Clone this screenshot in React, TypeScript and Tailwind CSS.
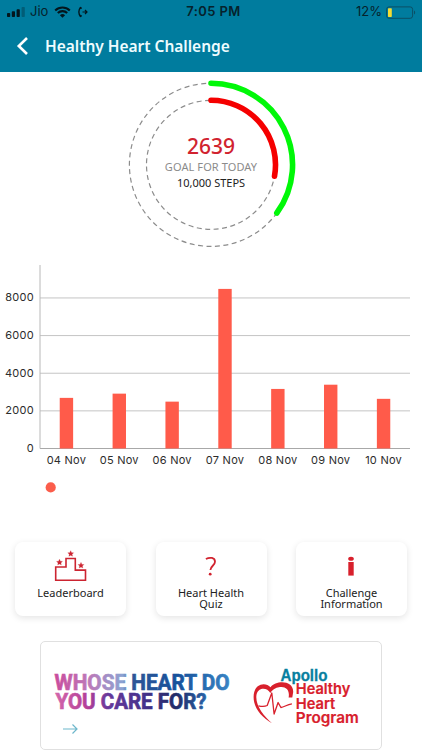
const days = [
  { label: "04 Nov", steps: 2690 },
  { label: "05 Nov", steps: 2915 },
  { label: "06 Nov", steps: 2490 },
  { label: "07 Nov", steps: 8480 },
  { label: "08 Nov", steps: 3165 },
  { label: "09 Nov", steps: 3390 },
  { label: "10 Nov", steps: 2639 },
]

const ticks = [0, 2000, 4000, 6000, 8000]

const CHART_LEFT = 40
const CHART_RIGHT = 410
const BASELINE = 188.5
const PX_PER_STEP = 0.01882

function StatusBar() {
  return (
    <div className="grid h-6 grid-cols-3 items-center pl-[7px] pr-[6px] font-['Inter','Liberation_Sans',sans-serif] text-[13px] text-[#06222c]">
      <div className="flex items-center">
        <svg width="19" height="12" viewBox="0 0 19 12" fill="#03161d">
          <rect x="0" y="7" width="3.2" height="4" rx="0.8" />
          <rect x="4.8" y="5.3" width="3.2" height="5.7" rx="0.8" />
          <rect x="9.6" y="3.2" width="3.2" height="7.8" rx="0.8" />
          <rect x="14.6" y="1" width="3.2" height="10" rx="0.8" opacity="0.3" />
        </svg>
        <span className="ml-[4px] w-[19px]">Jio</span>
        <svg className="ml-[5px]" width="17" height="12" viewBox="0 0 17 12" fill="none" stroke="#03161d" strokeWidth="2.1">
          <path d="M1.2 4.4a10.6 10.6 0 0 1 14.6 0" />
          <path d="M3.8 7.1a6.7 6.7 0 0 1 9.4 0" />
          <path d="M8.5 11.8 5.9 9.2a3.8 3.8 0 0 1 5.2 0z" fill="#03161d" stroke="none" />
        </svg>
        <svg className="ml-[6px]" width="12" height="12" viewBox="0 0 12 12" fill="none" stroke="#03161d">
          <path d="M3.8 1.2C1.2 3.5 1.2 8.5 3.8 10.8" strokeWidth="1.4" />
          <path d="M3.2 1.2l1.2 1.6M3.2 10.8l1.2-1.6" strokeWidth="1.8" />
          <path d="M5.5 6H10M8 4l2 2-2 2" strokeWidth="1.2" />
        </svg>
      </div>
      <div className="pl-[4px] text-center text-[13px] font-semibold tracking-[0.4px]">7:05 PM</div>
      <div className="flex items-center justify-end">
        <span className="mr-[4px] text-[13px]">12%</span>
        <svg width="30" height="13" viewBox="0 0 30 13">
          <rect x="0.6" y="0.9" width="26" height="11.4" rx="2.4" fill="none" stroke="#0b4f65" />
          <rect x="2" y="2.3" width="3.8" height="8.6" rx="0.6" fill="#f5dc32" />
          <path d="M28 4.6c1.6.6 1.6 3.4 0 4z" fill="#0b4f65" />
        </svg>
      </div>
    </div>
  )
}

function Header() {
  return (
    <header className="h-[72px] bg-[#007c9e]">
      <StatusBar />
      <div className="flex h-[43px] items-center pl-[16px]">
        <svg width="14" height="20" viewBox="0 0 14 20" fill="none" stroke="#fff" strokeWidth="2.6">
          <path d="M11 2 2.8 10l8.2 8" />
        </svg>
        <h1 className="ml-[15px] pt-[2px] text-[15.5px] font-semibold tracking-[-0.02px] whitespace-nowrap text-[#eefcff]">
          Healthy Heart Challenge
        </h1>
      </div>
    </header>
  )
}

function GoalRing() {
  return (
    <section className="grid h-[188px] place-items-center [grid-template-areas:'ring']">
      <svg className="[grid-area:ring]" width="422" height="188" viewBox="0 72 422 188" fill="none">
        <circle cx="211" cy="164.8" r="81.6" stroke="#8c8c8c" strokeWidth="1.2" strokeDasharray="5 3.5" />
        <circle cx="211" cy="164.8" r="64.5" stroke="#8c8c8c" strokeWidth="1.2" strokeDasharray="5 3.5" />
        <path d="M211 83.2A81.6 81.6 0 0 1 276.8 213" stroke="#00f808" strokeWidth="5.6" strokeLinecap="round" />
        <path d="M211 100.3A64.5 64.5 0 0 1 274.5 176.2" stroke="#f50000" strokeWidth="5.6" strokeLinecap="round" />
      </svg>
      <div className="flex flex-col items-center pb-[9px] text-center [grid-area:ring]">
        <span className="text-[21px] leading-[24px] font-medium text-[#d1232f]">2639</span>
        <span className="text-[11px] leading-[17px] tracking-[0.1px] text-[#8b8b8b]">GOAL FOR TODAY</span>
        <span className="text-[11px] leading-[15px] text-[#222]">10,000 STEPS</span>
      </div>
    </section>
  )
}

function StepsChart() {
  const slot = (CHART_RIGHT - CHART_LEFT) / days.length

  return (
    <section className="h-[270px]">
      <svg width="422" height="240" viewBox="0 0 422 240" className="font-['Inter','Liberation_Sans',sans-serif] text-[11px]">
        {ticks.map((tick) => {
          const y = BASELINE - tick * PX_PER_STEP
          return (
            <g key={tick}>
              <line x1={CHART_LEFT} x2={CHART_RIGHT} y1={y} y2={y} stroke={tick ? "#c4c4c4" : "#a8a8a8"} />
              <text x="34" y={y + 3.5} textAnchor="end" fill="#2c2c2c" letterSpacing="0.3">
                {tick}
              </text>
            </g>
          )
        })}
        <line x1={CHART_LEFT} x2={CHART_LEFT} y1="5" y2={BASELINE} stroke="#b8b8b8" />
        {days.map((day, i) => {
          const center = CHART_LEFT + slot * (i + 0.5)
          const height = day.steps * PX_PER_STEP
          return (
            <g key={day.label}>
              <rect x={center - 6.7} y={BASELINE - height} width="13.4" height={height} fill="#ff5b4a" />
              <text x={center} y="204.4" textAnchor="middle" fill="#2c2c2c" letterSpacing="0.25">
                {day.label}
              </text>
            </g>
          )
        })}
        <circle cx="50.7" cy="227.4" r="5.1" fill="#fb5d4b" />
      </svg>
    </section>
  )
}

function Star({ x, y }: { x: number; y: number }) {
  return (
    <path
      transform={`translate(${x} ${y})`}
      d="M0-2.9.9-.9 2.9-.8 1.4.7 1.8 2.6 0 1.7-1.8 2.6-1.4.7-2.9-.8-.9-.9z"
      fill="#cc2431"
      stroke="#cc2431"
      strokeWidth="0.3"
    />
  )
}

function PodiumIcon() {
  return (
    <svg width="34" height="32" viewBox="0 0 34 32">
      <path d="M1.7 17H12V8.5h9.3v11.6h10.2v10.2H1.7z" fill="none" stroke="#cc2431" strokeWidth="1.6" />
      <Star x={16.7} y={3.6} />
      <Star x={5.5} y={12.2} />
      <Star x={27} y={15.3} />
    </svg>
  )
}

function QuestionIcon() {
  return (
    <svg width="14" height="32" viewBox="0 0 14 32">
      <path
        d="M1.9 9C6 6.8 11 7.6 11 11.7c0 3.8-4.5 4.3-4.6 8.3"
        fill="none"
        stroke="#d1232f"
        strokeWidth="1.8"
      />
      <circle cx="6.2" cy="24.2" r="1.4" fill="#d1232f" />
    </svg>
  )
}

function InfoIcon() {
  return (
    <svg width="10" height="32" viewBox="0 0 10 32" fill="#d8202c">
      <ellipse cx="4" cy="8.8" rx="2.8" ry="2" />
      <path d="M1.3 12h5.4v13.6H1.3z" />
    </svg>
  )
}

const cards = [
  { title: ["Leaderboard"], icon: <PodiumIcon /> },
  { title: ["Heart Health", "Quiz"], icon: <QuestionIcon /> },
  { title: ["Challenge", "Information"], icon: <InfoIcon /> },
]

function Cards() {
  return (
    <section className="flex justify-between px-[15px] pt-[12px]">
      {cards.map((card) => (
        <button
          key={card.title[0]}
          className="flex h-[74px] w-[111px] flex-col items-center rounded-[8px] bg-white pt-[8px] shadow-[0_2px_7px_rgba(0,0,0,0.11)]"
        >
          {card.icon}
          <span className="mt-[5px] text-[11px] leading-[11px] text-[#222]">
            {card.title.map((line) => (
              <span key={line} className="block whitespace-nowrap">
                {line}
              </span>
            ))}
          </span>
        </button>
      ))}
    </section>
  )
}

function Banner() {
  return (
    <section className="mx-[40px] mt-[25px] h-[109px] w-[342px] rounded-[5px] border border-[#e0e0e0]">
      <svg width="340" height="107" viewBox="41 642 340 107">
        <defs>
          <linearGradient id="line-one" gradientUnits="userSpaceOnUse" x1="54" y1="0" x2="230" y2="0">
            <stop offset="0" stopColor="#c94b9c" />
            <stop offset="0.2" stopColor="#bd79b9" />
            <stop offset="0.39" stopColor="#8ba3d2" />
            <stop offset="0.45" stopColor="#2e5697" />
            <stop offset="0.7" stopColor="#17519b" />
            <stop offset="1" stopColor="#3984c4" />
          </linearGradient>
          <linearGradient id="line-two" gradientUnits="userSpaceOnUse" x1="54" y1="0" x2="206" y2="0">
            <stop offset="0" stopColor="#d468ac" />
            <stop offset="0.22" stopColor="#b43f98" />
            <stop offset="0.36" stopColor="#65399b" />
            <stop offset="0.6" stopColor="#44308a" />
            <stop offset="0.8" stopColor="#222b68" />
            <stop offset="1" stopColor="#2863a8" />
          </linearGradient>
        </defs>
        <g className="font-['Roboto','Liberation_Sans',sans-serif] text-[22.5px] font-bold" strokeWidth="0.7">
          <text
            x="54.5"
            y="690.3"
            textLength="175"
            lengthAdjust="spacingAndGlyphs"
            fill="url(#line-one)"
            stroke="url(#line-one)"
          >
            WHOSE HEART DO
          </text>
          <text
            x="55.5"
            y="708.8"
            textLength="151"
            lengthAdjust="spacingAndGlyphs"
            fill="url(#line-two)"
            stroke="url(#line-two)"
          >
            YOU CARE FOR?
          </text>
        </g>
        <path d="M63 729h14M72.5 724.5l4.500 4.500-4.500 4.500" fill="none" stroke="#6db7cb" strokeWidth="1.2" />

        <text
          x="280.5"
          y="680.5"
          textLength="47"
          lengthAdjust="spacingAndGlyphs"
          fill="#087f9f"
          stroke="#087f9f"
          strokeWidth="0.3"
          className="font-['Liberation_Sans',sans-serif] text-[16px] font-bold"
        >
          Apollo
        </text>
        <g
          fill="#d8202c"
          stroke="#d8202c"
          strokeWidth="0.2"
          className="font-['Inter','Liberation_Sans',sans-serif] text-[15px] font-semibold"
        >
          <text x="295.8" y="694" textLength="54.5" lengthAdjust="spacingAndGlyphs">
            Healthy
          </text>
          <text x="295.8" y="708.5" textLength="39.5" lengthAdjust="spacingAndGlyphs">
            Heart
          </text>
          <text x="295.8" y="722.5" textLength="63" lengthAdjust="spacingAndGlyphs">
            Program
          </text>
        </g>
        <path
          d="M272 723.3C262 717.5 253.6 708 253.6 697C253.6 683.5 265.5 681.5 270.5 687.3C276 680 293.5 680 293.2 692L292.3 697.6H288.6C290 690 286 686.2 280 687C275 687.6 271.8 690.2 270.3 693C267 686.8 256.5 687 256.3 697C256.2 706.5 264 716 272 723.3Z"
          fill="#d8202c"
        />
        <path
          d="M258.5 705.8c3.5.8 6.5.7 8.7-.3l4.6-12.5 2.300 21 4-11.5 2.800 5c3.500-.5 6-3 11-3.600"
          fill="none"
          stroke="#d8202c"
          strokeWidth="1.3"
          strokeLinejoin="round"
        />
      </svg>
    </section>
  )
}

export default function App() {
  return (
    <main className="h-[750px] w-[422px] overflow-hidden bg-white font-['Noto_Sans','Open_Sans',sans-serif]">
      <Header />
      <GoalRing />
      <StepsChart />
      <Cards />
      <Banner />
    </main>
  )
}
